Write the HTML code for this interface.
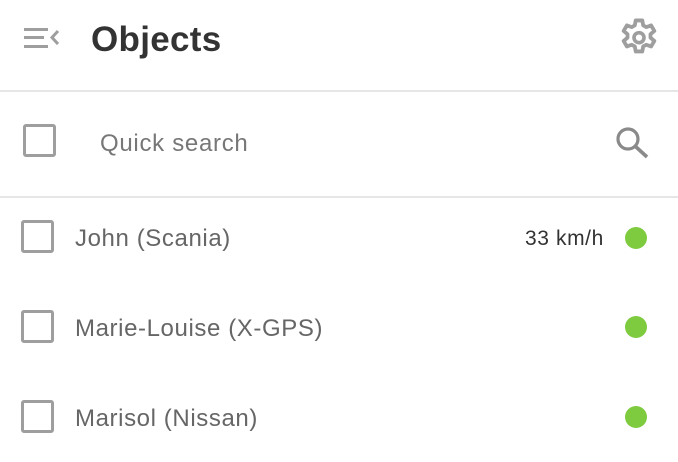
<!DOCTYPE html>
<html><head><style>
body{margin:0;width:678px;height:462px;background:#fff;font-family:"Liberation Sans",sans-serif;position:relative;overflow:hidden}
.a{position:absolute}
.cb{position:absolute;width:27px;height:27px;border:3px solid #9e9e9e;border-radius:3px}
.t{position:absolute;left:75px;font-size:24px;letter-spacing:0.6px;color:#666;line-height:1}
.dot{position:absolute;left:625px;width:22px;height:22px;border-radius:50%;background:#7ecb3f}
.hr{position:absolute;left:0;width:678px;height:2px;background:#e6e6e6}
</style></head><body>
<svg class="a" style="left:22px;top:24px" width="40" height="30" viewBox="0 0 40 30">
<rect x="2" y="4" width="24" height="3" fill="#9e9e9e"/>
<rect x="2" y="12" width="20" height="3" fill="#9e9e9e"/>
<rect x="2" y="21" width="24" height="3" fill="#9e9e9e"/>
<path d="M36 7 L30 13.5 L36 20" stroke="#9e9e9e" stroke-width="3" fill="none"/>
</svg>
<div class="a" style="left:91px;top:20px;font-size:35px;font-weight:bold;color:#333;line-height:40px;letter-spacing:0.3px">Objects</div>
<svg class="a" style="left:616px;top:16px" width="46" height="46" viewBox="0 0 24 24">
<path fill="none" stroke="#9e9e9e" stroke-width="2" stroke-linejoin="round" d="M10.3 2.3h3.4l.5 2.6 1.6.9 2.5-.9 1.7 2.9-2 1.7v1.8l2 1.7-1.7 2.9-2.5-.9-1.6.9-.5 2.6h-3.4l-.5-2.6-1.6-.9-2.5.9-1.7-2.9 2-1.7v-1.8l-2-1.7 1.7-2.9 2.5.9 1.6-.9z"/>
<circle cx="12" cy="11.3" r="2.6" fill="none" stroke="#9e9e9e" stroke-width="1.9"/>
</svg>
<div class="hr" style="top:90px"></div>
<div class="cb" style="left:23px;top:124px"></div>
<div class="a" style="left:100px;top:131px;font-size:24px;letter-spacing:0.7px;color:#777;line-height:26px">Quick search</div>
<svg class="a" style="left:613px;top:125px" width="38" height="36" viewBox="0 0 38 36">
<circle cx="15" cy="14" r="10" fill="none" stroke="#8a8a8a" stroke-width="3.2"/>
<path d="M22 21 L34 32" stroke="#8a8a8a" stroke-width="3.6"/>
</svg>
<div class="hr" style="top:196px"></div>
<div class="cb" style="left:21px;top:220px"></div>
<div class="t" style="top:227px">John (Scania)</div>
<div class="a" style="left:525px;top:228px;font-size:21px;letter-spacing:0.6px;color:#333;line-height:22px">33 km/h</div>
<div class="dot" style="top:227px"></div>
<div class="cb" style="left:21px;top:310px"></div>
<div class="t" style="top:317px">Marie-Louise (X-GPS)</div>
<div class="dot" style="top:316px"></div>
<div class="cb" style="left:21px;top:400px"></div>
<div class="t" style="top:407px">Marisol (Nissan)</div>
<div class="dot" style="top:406px"></div>
</body></html>
